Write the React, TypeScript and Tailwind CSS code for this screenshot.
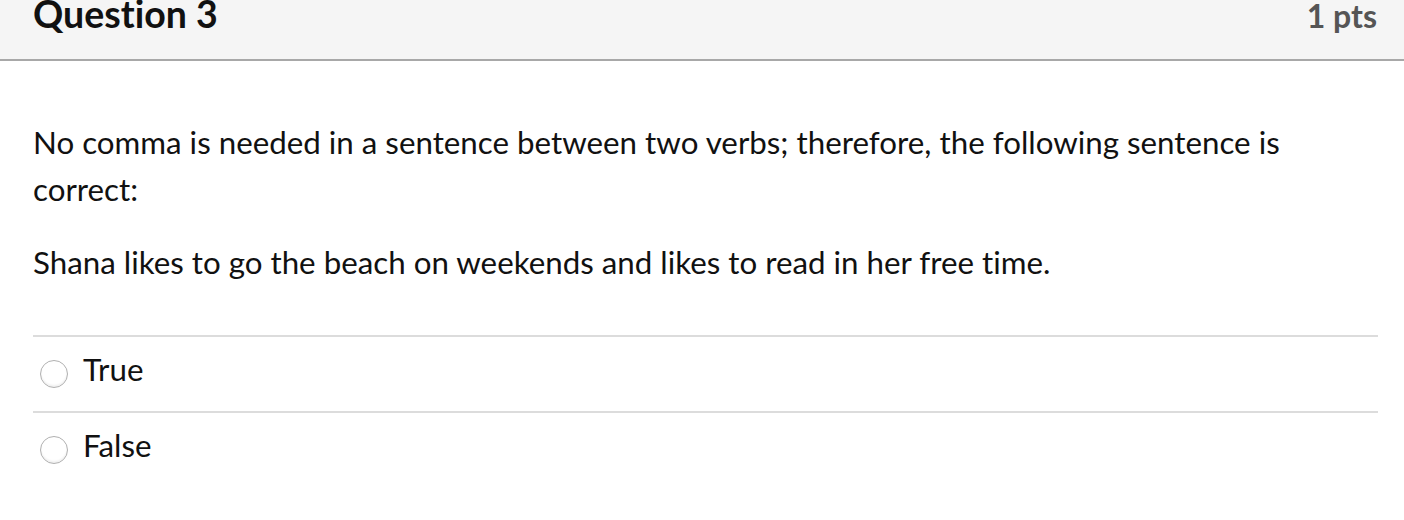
import React, { useState } from "react";

const answers = ["True", "False"];

const App: React.FC = () => {
  const [selected, setSelected] = useState<string | null>(null);

  return (
    <div className="min-h-[520px] bg-white font-['Lato','Liberation_Sans',sans-serif] text-[#111] [font-variant-ligatures:none]">
      {/* Question header */}
      <div className="h-[61px] bg-[#f5f5f5] border-b-2 border-[#a8a8a8] pl-[33px] pr-[27px] flex justify-between items-start">
        <h2 className="text-[37.5px] font-bold leading-[27px]">Question 3</h2>
        <div className="text-[32px] font-bold leading-[27px] pt-[2px] text-[#555]">1 pts</div>
      </div>

      <div className="pl-[33px] pr-[26px]">
        {/* Question text */}
        <div className="pt-[58px] text-[31.3px] leading-[47px]">
          <p>
            No comma is needed in a sentence between two verbs; therefore, the following sentence is correct:
          </p>
          <p className="mt-[26px]">
            Shana likes to go the beach on weekends and likes to read in her free time.
          </p>
        </div>

        {/* Answers */}
        <div className="mt-[49px]">
          {answers.map((a) => (
            <label
              key={a}
              className="flex items-center h-[76px] border-t-2 border-[#dcdcdc] cursor-pointer"
            >
              <span
                onClick={() => setSelected(a)}
                className="ml-[7px] w-[28px] h-[28px] rounded-full border border-[#b0b0b0] bg-white shadow-[inset_0_-2px_2px_rgba(0,0,0,0.06)] flex items-center justify-center"
              >
                {selected === a && <span className="w-[11px] h-[11px] rounded-full bg-[#333]" />}
              </span>
              <span className="ml-[15px] text-[31.3px] leading-[47px] -mt-[10px]">{a}</span>
            </label>
          ))}
        </div>
      </div>
    </div>
  );
};

export default App;
